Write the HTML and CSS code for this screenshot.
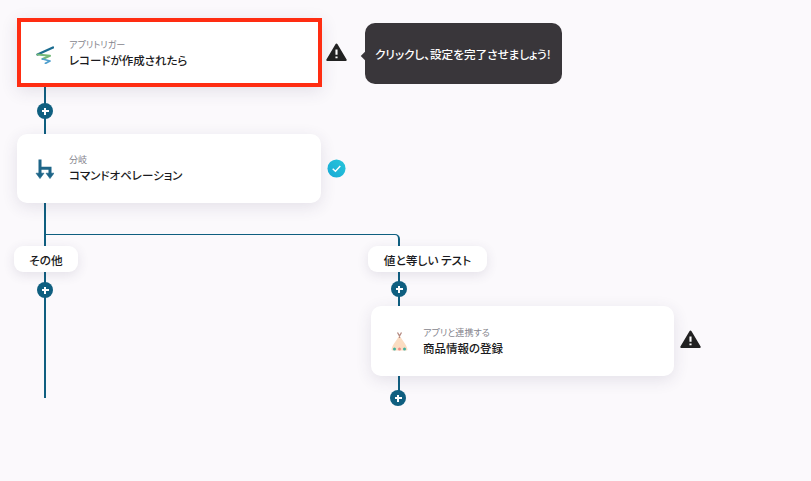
FILE: index.html
```html
<!DOCTYPE html>
<html lang="ja">
<head>
<meta charset="utf-8">
<title>フロー</title>
<link rel="stylesheet" href="styles.css">
</head>
<body>
<main class="canvas">
  <div class="line v main-v"></div>
  <div class="line v right-v"></div>
  <div class="branch"></div>

  <section class="card card-a selected">
    <svg class="icon" viewBox="0 0 20 20" aria-hidden="true">
      <path d="M19 3.5 L3.5 10.5" stroke="#1b6c90" stroke-width="2.4" fill="none" stroke-linecap="round"/>
      <path d="M3.5 10.5 L16 11.8 L8.5 15" stroke="#74b878" stroke-width="2" fill="none" stroke-linecap="round" stroke-linejoin="round"/>
      <path d="M8.5 15 L16 17 L11.5 19.3" stroke="#4f9fce" stroke-width="1.8" fill="none" stroke-linecap="round" stroke-linejoin="round"/>
    </svg>
    <div class="copy"><p class="sub">アプリトリガー</p><p class="title">レコードが作成されたら</p></div>
  </section>
  <svg class="warn warn-a" viewBox="0 0 24 24" aria-hidden="true"><path d="M12 3 L22.5 20.5 H1.5 Z" fill="#222" stroke="#222" stroke-width="2.4" stroke-linejoin="round"/><path d="M12 8.5 V14.5 M12 16.6 V18.6" stroke="#fff" stroke-width="2.4"/></svg>
  <div class="tip">クリックし、設定を完了させましょう!</div>

  <button class="plus plus-a" aria-label="追加"></button>

  <section class="card card-b">
    <svg class="icon" viewBox="0 0 20 20" aria-hidden="true">
      <path d="M6 0.5 V15 M6 9.3 H16 V15" stroke="#1d6588" stroke-width="3" fill="none"/>
      <path d="M2 14.2 H10 L6 19.6 Z M12 14.2 H20 L16 19.6 Z" fill="#1d6588" stroke="#1d6588" stroke-width=".6" stroke-linejoin="round"/>
    </svg>
    <div class="copy"><p class="sub">分岐</p><p class="title">コマンドオペレーション</p></div>
  </section>
  <svg class="check" viewBox="0 0 20 20" aria-hidden="true">
    <defs><linearGradient id="g" x1="0" y1="1" x2="1" y2="0"><stop offset="0" stop-color="#17a9d6"/><stop offset="1" stop-color="#28c6da"/></linearGradient></defs>
    <circle cx="10" cy="10" r="9.5" fill="url(#g)"/>
    <path d="M6 10.3 L8.9 13 L14 7.4" stroke="#fff" stroke-width="1.5" fill="none"/>
  </svg>

  <div class="pill pill-a">その他</div>
  <div class="pill pill-b">値と等しい テスト</div>
  <button class="plus plus-b" aria-label="追加"></button>
  <button class="plus plus-c" aria-label="追加"></button>

  <section class="card card-c">
    <svg class="icon" viewBox="0 0 20 20" aria-hidden="true">
      <path d="M11.5 4 C13.5 9 18.5 13 19.5 18.5 Q19.5 19.5 18 19.5 H5 Q3.5 19.5 3.5 18.5 C4.5 13 9.5 9 11.5 4 Z" fill="#fbdcc2"/>
      <path d="M9.5 1.5 L11.5 5 L13.5 1.5 M11.5 3.5 V7" stroke="#b58a80" stroke-width="1.3" fill="none"/>
      <circle cx="6.5" cy="18" r="1.5" fill="#3fb0a0"/><circle cx="11.5" cy="18" r="1.5" fill="#ee8f85"/><circle cx="16.5" cy="18" r="1.5" fill="#3fb0a0"/>
    </svg>
    <div class="copy"><p class="sub">アプリと連携する</p><p class="title">商品情報の登録</p></div>
  </section>
  <svg class="warn warn-c" viewBox="0 0 24 24" aria-hidden="true"><path d="M12 3 L22.5 20.5 H1.5 Z" fill="#222" stroke="#222" stroke-width="2.4" stroke-linejoin="round"/><path d="M12 8.5 V14.5 M12 16.6 V18.6" stroke="#fff" stroke-width="2.4"/></svg>
  <button class="plus plus-d" aria-label="追加"></button>
</main>
</body>
</html>
```
FILE: styles.css
```css
* { box-sizing: border-box; }
html, body { margin: 0; height: 100%; }
body {
  background: #fbf9fc;
  font-family: "Noto Sans CJK JP", "Noto Sans", sans-serif;
  font-feature-settings: "palt";
  color: #1a1a20;
  overflow: hidden;
}
.canvas { position: relative; width: 811px; height: 481px; overflow: hidden; }

.card {
  position: absolute;
  display: flex;
  align-items: center;
  gap: 15px;
  padding-left: 17px;
  background: #fff;
  border-radius: 10px;
  box-shadow: 0 4px 16px rgba(60, 50, 90, .12);
}
.card-a { left: 17px; top: 18px; width: 305px; height: 69px; }
.card-b { left: 17px; top: 134px; width: 304px; height: 69px; }
.card-c { left: 371px; top: 306px; width: 303px; height: 70px; }
.selected { border: 4px solid #ff2d12; border-radius: 0; padding-left: 13px; padding-top: 2px; }

.icon { width: 20px; height: 20px; flex: none; }
.copy { display: flex; flex-direction: column; gap: 3px; }
.sub { margin: 0; font-size: 9.1px; line-height: 11px; color: #85858d; }
.title { margin: 0; font-size: 11.5px; line-height: 15px; font-weight: 500; }

.warn { position: absolute; width: 21px; height: 21px; }
.warn-a { left: 326px; top: 42px; }
.warn-c { left: 680px; top: 329px; }
.check { position: absolute; left: 327px; top: 159px; width: 19px; height: 19px; }

.tip {
  position: absolute; left: 365px; top: 23px; width: 197px; height: 61px;
  display: flex; align-items: center; padding-left: 10px;
  background: #39363a; color: #fff; border-radius: 10px;
  font-size: 11.6px; font-weight: 500;
}
.tip::before {
  content: ""; position: absolute; left: -3px; top: 30px; width: 6px; height: 6px;
  background: #39363a; transform: rotate(45deg);
}

.line { position: absolute; background: #0f5f80; }
.main-v { left: 44px; top: 87px; width: 2px; height: 311px; }
.right-v { left: 398px; top: 240px; width: 2px; height: 155px; }
.branch {
  position: absolute; left: 45px; top: 234px; width: 355px; height: 12px;
  border-top: 1px solid #0f5f80; border-right: 2px solid #0f5f80;
  border-top-right-radius: 5px;
}

.plus {
  position: absolute; width: 16px; height: 16px; padding: 0; border: 0; border-radius: 50%;
  background:
    linear-gradient(#fff, #fff) center / 7px 2px no-repeat,
    linear-gradient(#fff, #fff) center / 2px 7px no-repeat,
    #0f5f80;
}
.plus-a { left: 37px; top: 103px; }
.plus-b { left: 37px; top: 282px; }
.plus-c { left: 391px; top: 281px; }
.plus-d { left: 390px; top: 390px; }

.pill {
  position: absolute; top: 246px; height: 26px;
  display: flex; align-items: center; justify-content: center;
  background: #fff; border-radius: 9px;
  box-shadow: 0 3px 12px rgba(60, 50, 90, .12);
  font-size: 11.7px; font-weight: 500;
}
.pill-a { left: 14px; width: 64px; }
.pill-b { left: 368px; width: 119px; }
```
